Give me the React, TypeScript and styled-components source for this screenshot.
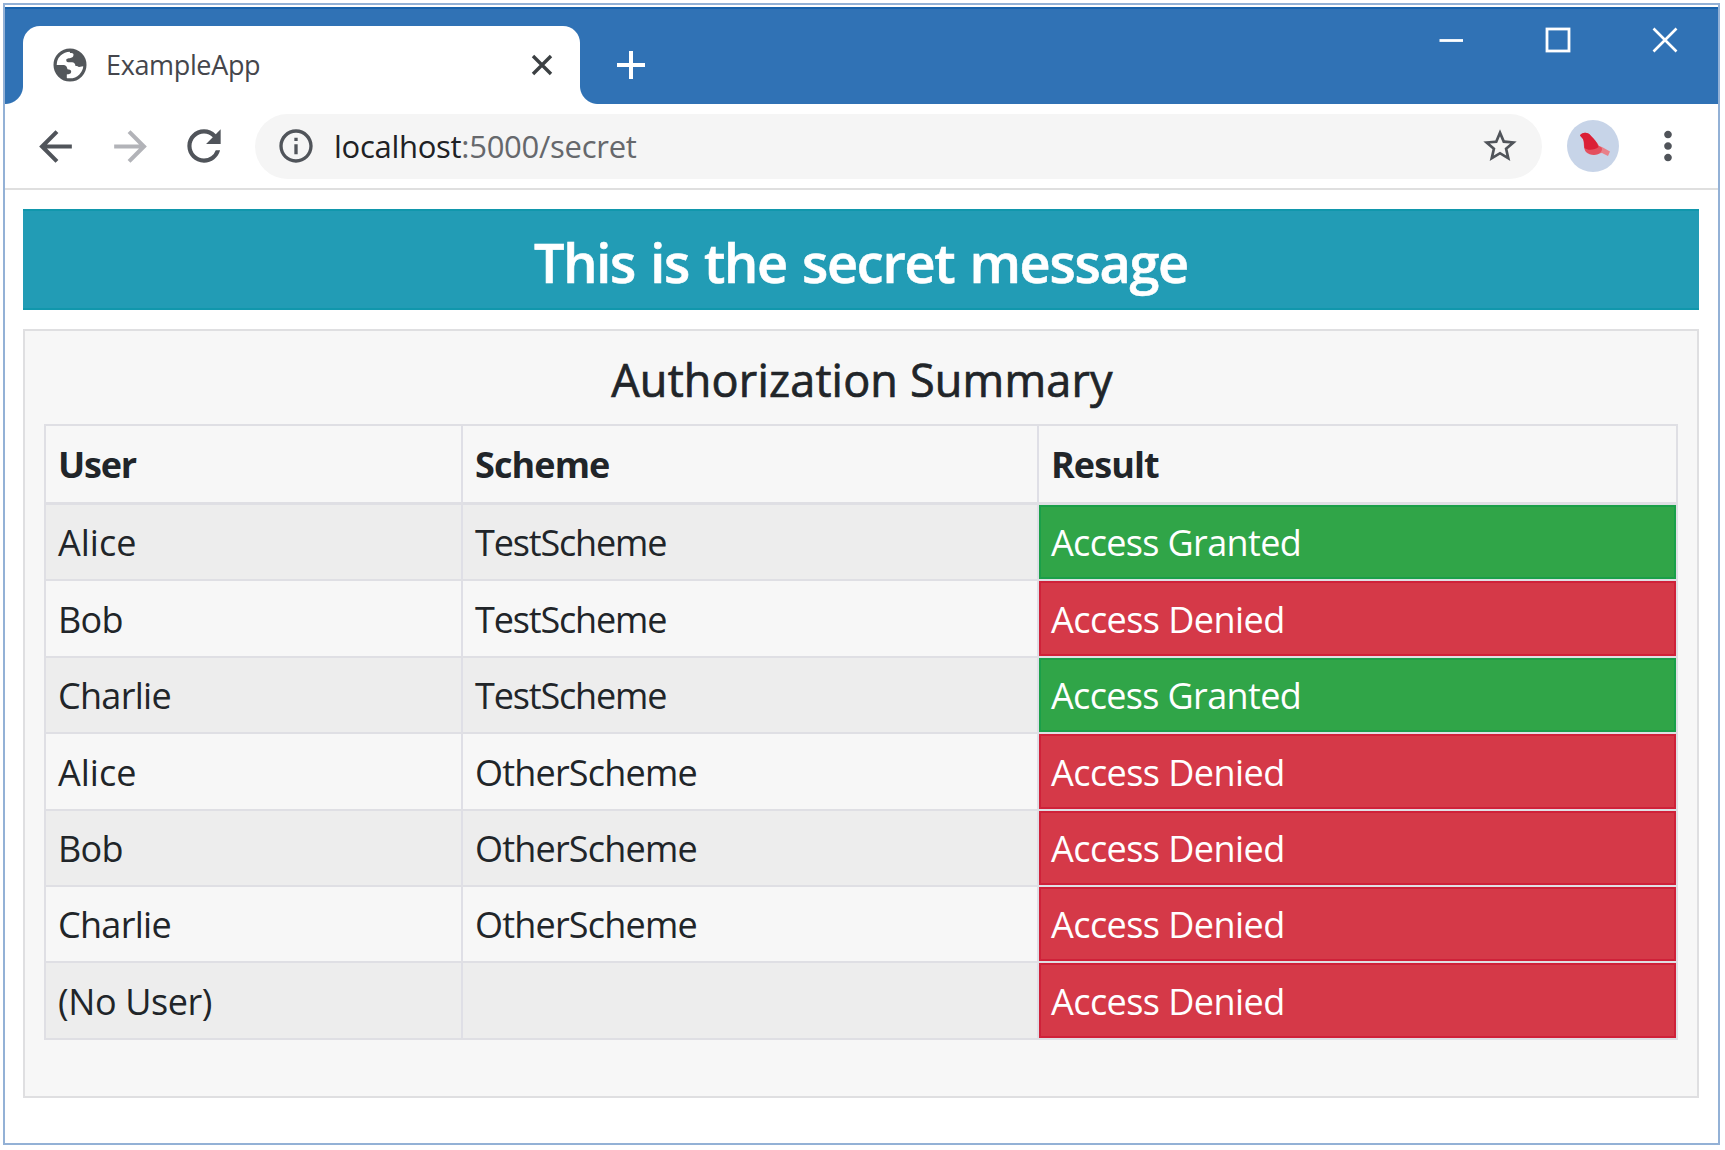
import React from "react";
import styled, { createGlobalStyle, css } from "styled-components";
import { MdArrowBack, MdArrowForward, MdRefresh, MdInfoOutline, MdStarBorder, MdMoreVert } from "react-icons/md";

const GlobalStyle = createGlobalStyle`
  *, *::before, *::after { box-sizing: border-box; }
  body { margin: 0; background: #fff; font-family: "Open Sans", "Noto Sans", sans-serif; color: #212529; }
`;

const Page = styled.div`
  width: 1725px;
  height: 1150px;
  padding: 3px 5px 5px 3px;
`;

const Window = styled.div`
  height: 100%;
  display: flex;
  flex-direction: column;
  border: 2px solid #93b1d6;
  padding-top: 2px;
  background: #fff;
`;

const TabStrip = styled.header`
  height: 97px;
  flex: none;
  display: flex;
  background: #3072b5;
  border-top: 2px solid #1762ad;
`;

const Tab = styled.div`
  position: relative;
  display: flex;
  align-items: center;
  width: 557px;
  margin: 17px 0 0 18px;
  padding: 0 25px 0 30px;
  background: #fff;
  border-radius: 17px 17px 0 0;
  &::before, &::after {
    content: "";
    position: absolute;
    bottom: 0;
    width: 18px;
    height: 18px;
  }
  &::before {
    left: -18px;
    background: radial-gradient(circle at 0 0, transparent 17.5px, #fff 18.5px);
  }
  &::after {
    right: -18px;
    background: radial-gradient(circle at 100% 0, transparent 17.5px, #fff 18.5px);
  }
`;

const Label = styled.span<{ $size: number; $spacing?: number; $color?: string }>`
  font-size: ${(p) => p.$size}px;
  letter-spacing: ${(p) => p.$spacing ?? 0}px;
  color: ${(p) => p.$color ?? "inherit"};
  line-height: 40px;
  white-space: nowrap;
`;

const TabTitle = styled(Label)`
  flex: 1;
  margin-left: 19px;
`;

const NewTab = styled.div`
  display: flex;
  align-items: center;
  margin: 17px 0 0 37px;
`;

const WindowControls = styled.div`
  display: flex;
  margin: 18px 40px 0 auto;
  gap: 81px;
`;

const Toolbar = styled.nav`
  height: 86px;
  flex: none;
  display: flex;
  align-items: center;
  padding: 0 18px 0 26px;
  border-bottom: 2px solid #dfdfdf;
  color: #50545a;
`;

const ToolButton = styled.span<{ $left?: number; $color?: string }>`
  display: flex;
  margin-left: ${(p) => p.$left ?? 0}px;
  color: ${(p) => p.$color ?? "inherit"};
`;

const AddressBar = styled.div`
  display: flex;
  align-items: center;
  width: 1287px;
  height: 65px;
  margin-left: 26px;
  padding: 0 22px 0 21px;
  border-radius: 33px;
  background: #f5f5f5;
`;

const Url = styled(Label)`
  flex: 1;
  margin-left: 18px;
`;

const Host = styled.span`
  color: #202124;
`;

const Content = styled.main`
  flex: 1;
  display: flex;
  flex-direction: column;
  gap: 19px;
  padding: 19px 19px 0 18px;
`;

const Banner = styled.h1`
  margin: 0;
  height: 101px;
  flex: none;
  padding-top: 5px;
  text-align: center;
  font-size: 54px;
  font-weight: 600;
  letter-spacing: -1.3px;
  word-spacing: 2.4px;
  -webkit-text-stroke: 0.6px #fff;
  color: #fff;
  background: #229cb5;
  border: solid #1197ac;
  border-width: 2px 0;
  line-height: 93px;
`;

const Card = styled.section`
  height: 769px;
  display: flex;
  flex-direction: column;
  padding: 18px 19px 0 19px;
  border: 2px solid #dfdfe1;
  background: #f7f7f7;
`;

const CardTitle = styled.h2`
  margin: 0;
  height: 75px;
  line-height: 62px;
  text-align: center;
  font-size: 45px;
  font-weight: 500;
  letter-spacing: 0.17px;
  padding-left: 2px;
  -webkit-text-stroke: 0.7px #212529;
`;

const Table = styled.div`
  border: 2px solid #dfdfe4;
  border-bottom: 0;
`;

const Row = styled.div<{ $striped?: boolean; $head?: boolean }>`
  display: grid;
  grid-template-columns: 415px 576px 1fr;
  height: ${(p) => (p.$head ? 79 : 76.4)}px;
  border-bottom: ${(p) => (p.$head ? 3 : 2)}px solid #dfdfe4;
  background: ${(p) => (p.$striped ? "#ededed" : "#f7f7f7")};
`;

const Cell = styled.div<{ $head?: boolean; $tone?: "granted" | "denied"; $spacing?: number }>`
  display: flex;
  align-items: center;
  padding: ${(p) => (p.$head ? 0 : 1.5)}px 0 0 12px;
  font-size: 36px;
  letter-spacing: ${(p) => p.$spacing ?? -0.7}px;
  white-space: nowrap;
  font-weight: ${(p) => (p.$head ? 700 : 400)};
  & + & { border-left: 2px solid #dfdfe6; padding-left: ${(p) => (p.$tone ? 11 : 12)}px; }
  ${(p) =>
    p.$tone &&
    css`
      color: #fff;
      background: ${p.$tone === "granted" ? "#30a548" : "#d53948"};
      background-clip: padding-box;
      box-shadow: inset 0 0 0 2px ${p.$tone === "granted" ? "#1a9f49" : "#cf2139"};
    `}
`;

const Globe = () => (
  <svg width="34" height="34" viewBox="0 0 34 34">
    <circle cx="17" cy="17" r="14.9" fill="#fff" stroke="#53575b" strokeWidth="3.2" />
    <path d="M16.5 2 L17 5 C19 5 20.5 5 20.5 6.5 C20.5 9 19.5 9.5 17.5 10 C15 10.5 13 10.5 13.3 12.5 C13.5 14.5 15 14.3 18 14.3 C21.5 14.3 22 15.5 22.5 18 C24.5 18 25 18.5 26 19 L31.5 18 C32 9 25 2 16.5 2Z" fill="#53575b" />
    <path d="M2 17 H9.5 C13.5 17 14 19 14.5 21.3 C16 21.7 18 21.5 18.2 23.5 C18.2 26 16 26 13.8 26.5 V31 C7 30 2 24 2 17Z" fill="#53575b" />
  </svg>
);

const Bird = () => (
  <svg width="52" height="52" viewBox="0 0 52 52">
    <circle cx="26" cy="26" r="26" fill="#c7d4e8" />
    <path d="M28 25 L35 27 L43 31.5 L41 36 L35 33 L29 34 Z" fill="#e88089" />
    <path d="M13 15.5 C15 12 21 11.5 24 16 C27 19 30 22 32 26 C35 27 36 29 34 32 C31 36 23 36 19 32 C16 28 17.5 23 16 19 Z" fill="#e4505f" />
    <path d="M13 15.5 C15 12 21 11.5 24 16 C27 19 30 22 31.5 27 C28 30 21 31 17.5 28 C17 24 17.5 22 16 19 Z" fill="#db1f36" />
  </svg>
);

const tracking: Record<string, number> = {
  User: -1.2,
  Scheme: -0.9,
  Result: -0.9,
  Alice: 0,
  TestScheme: -1.15,
  OtherScheme: -0.8,
  "(No User)": -0.4,
  "Access Granted": -0.65,
  "Access Denied": -0.55,
};

const entries: [string, string, boolean][] = [
  ["Alice", "TestScheme", true],
  ["Bob", "TestScheme", false],
  ["Charlie", "TestScheme", true],
  ["Alice", "OtherScheme", false],
  ["Bob", "OtherScheme", false],
  ["Charlie", "OtherScheme", false],
  ["(No User)", "", false],
];

export default function App() {
  return (
    <Page>
      <GlobalStyle />
      <Window>
        <TabStrip>
          <Tab>
            <Globe />
            <TabTitle $size={27} $spacing={-0.35} $color="#45464c">ExampleApp</TabTitle>
            <svg width="26" height="26" viewBox="0 0 26 26" stroke="#3c4043" strokeWidth="3.4">
              <path d="M4 4 L22 22 M22 4 L4 22" />
            </svg>
          </Tab>
          <NewTab>
            <svg width="28" height="28" viewBox="0 0 28 28" stroke="#fff" strokeWidth="4">
              <path d="M14 0 V28 M0 14 H28" />
            </svg>
          </NewTab>
          <WindowControls>
            <svg width="26" height="26" viewBox="0 0 26 26" stroke="#fff" strokeWidth="2.8">
              <path d="M1.5 13.5 H25" />
            </svg>
            <svg width="26" height="26" viewBox="0 0 26 26" stroke="#fff" strokeWidth="2.8" fill="none">
              <rect x="2" y="2" width="22" height="22" />
            </svg>
            <svg width="26" height="26" viewBox="0 0 26 26" stroke="#fff" strokeWidth="2.6">
              <path d="M1.5 1.5 L24.5 24.5 M24.5 1.5 L1.5 24.5" />
            </svg>
          </WindowControls>
        </TabStrip>
        <Toolbar>
          <ToolButton><MdArrowBack size={49} /></ToolButton>
          <ToolButton $left={26} $color="#b2b3b8"><MdArrowForward size={49} /></ToolButton>
          <ToolButton $left={24}><MdRefresh size={50} /></ToolButton>
          <AddressBar>
            <MdInfoOutline size={40} />
            <Url $size={31} $spacing={-0.28} $color="#66686c">
              <Host>localhost</Host>:5000/secret
            </Url>
            <MdStarBorder size={40} />
          </AddressBar>
          <ToolButton $left={25}><Bird /></ToolButton>
          <ToolButton $left={26}><MdMoreVert size={46} /></ToolButton>
        </Toolbar>
        <Content>
          <Banner>This is the secret message</Banner>
          <Card>
            <CardTitle>Authorization Summary</CardTitle>
            <Table>
              <Row $head>
                {["User", "Scheme", "Result"].map((name) => (
                  <Cell key={name} $head $spacing={tracking[name]}>{name}</Cell>
                ))}
              </Row>
              {entries.map(([user, scheme, granted], i) => {
                const result = granted ? "Access Granted" : "Access Denied";
                return (
                  <Row key={i} $striped={i % 2 === 0}>
                    <Cell $spacing={tracking[user]}>{user}</Cell>
                    <Cell $spacing={tracking[scheme]}>{scheme}</Cell>
                    <Cell $tone={granted ? "granted" : "denied"} $spacing={tracking[result]}>{result}</Cell>
                  </Row>
                );
              })}
            </Table>
          </Card>
        </Content>
      </Window>
    </Page>
  );
}
